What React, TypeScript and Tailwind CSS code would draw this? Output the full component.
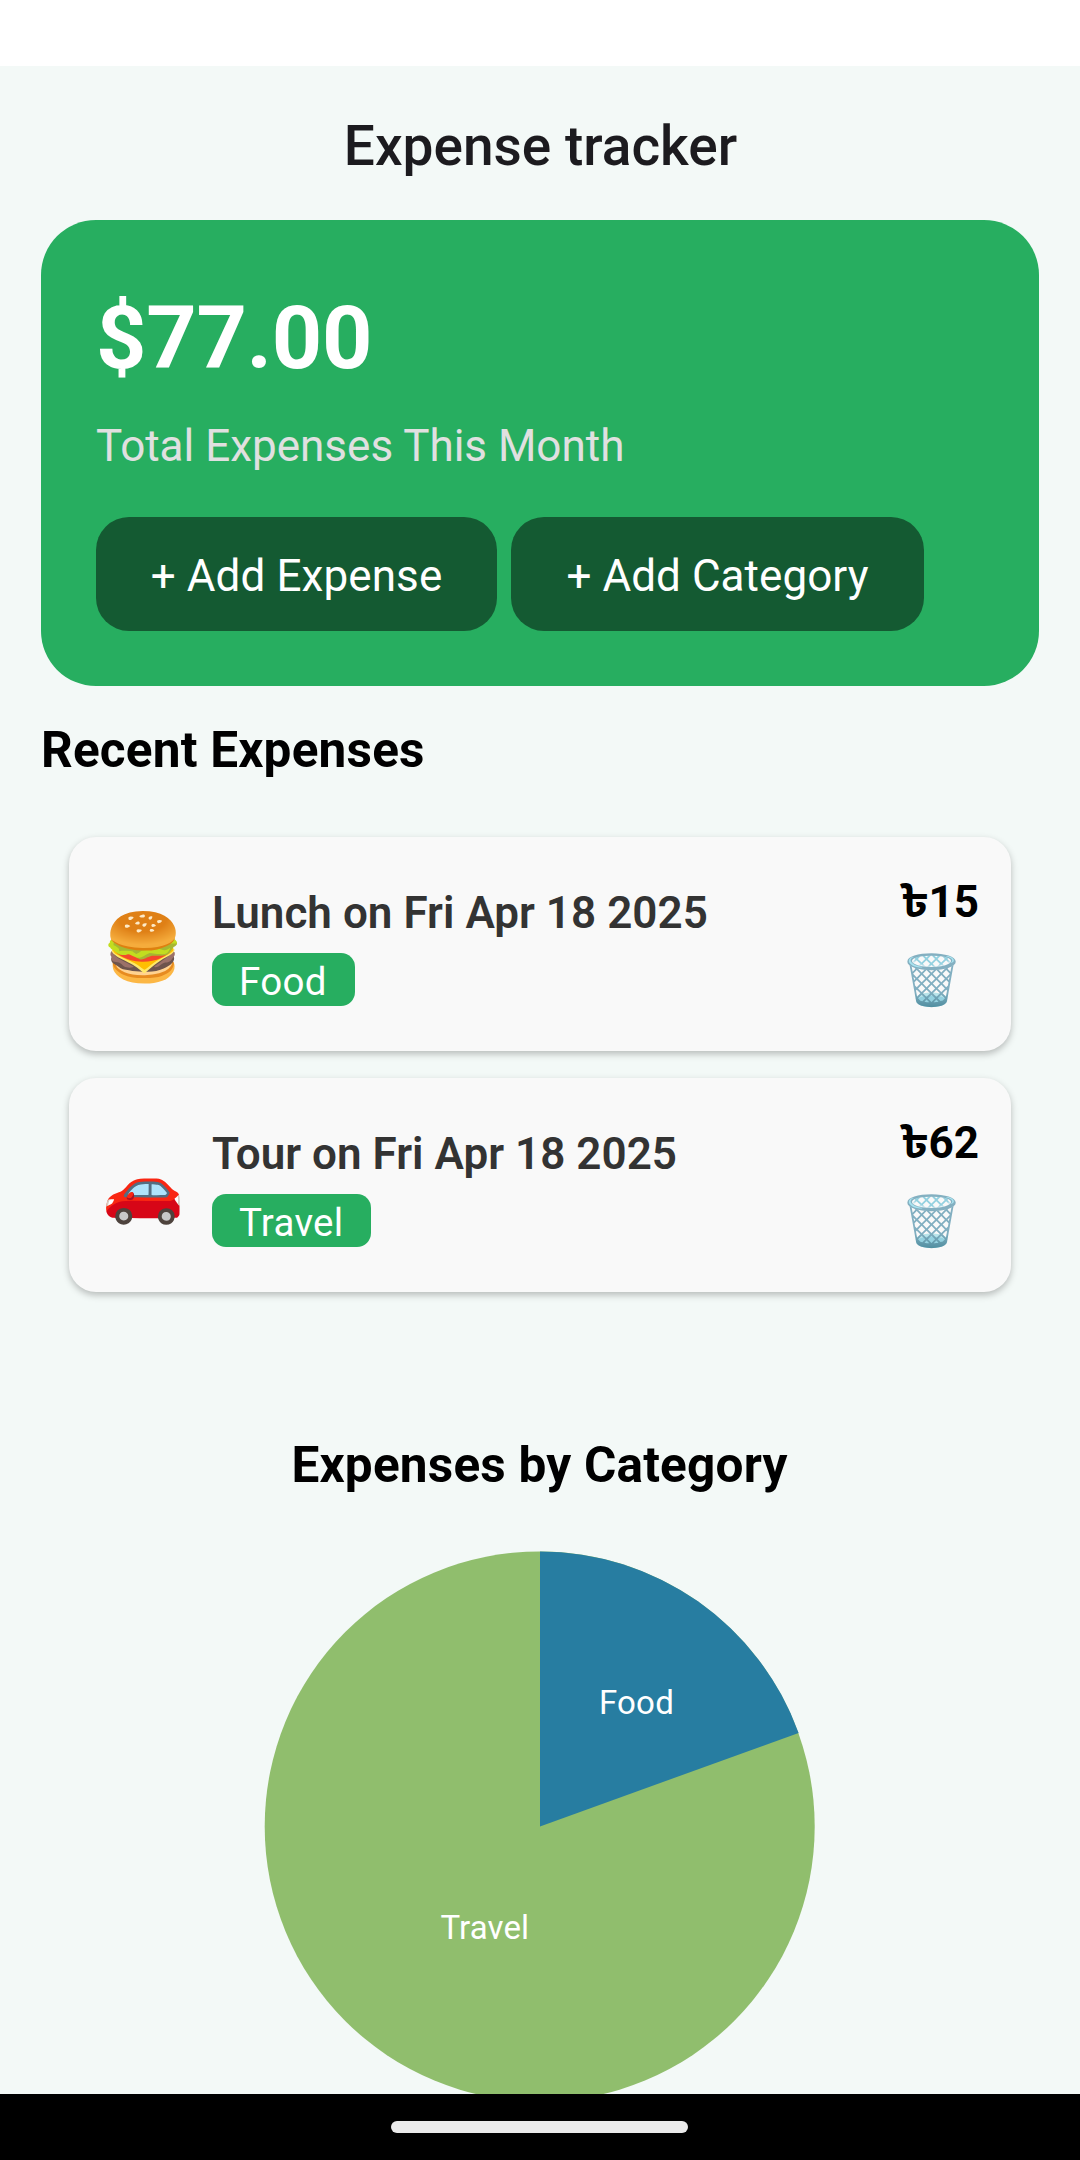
const expenses = [
  { icon: "🍔", title: "Lunch on Fri Apr 18 2025", category: "Food", amount: "15" },
  { icon: "🚗", title: "Tour on Fri Apr 18 2025", category: "Travel", amount: "62" },
];

export default function App() {
  return (
    <div className="flex h-[2160px] w-[1080px] flex-col overflow-hidden bg-[#f3f9f7] font-['Roboto','Noto_Sans_Bengali_UI',sans-serif] text-black">
      <div className="h-[66px] shrink-0 bg-white" />
      <main className="flex min-h-0 flex-1 flex-col overflow-hidden">
        <h1 className="mt-[44px] pl-px text-center text-[55px] leading-[72px] font-medium text-[#1c1b1f]">Expense tracker</h1>
        <section className="mx-[41px] mt-[38px] h-[466px] shrink-0 rounded-[55px] bg-[#27ae60] px-[55px] pt-[66px]">
          <p className="text-[88px] leading-[104px] font-bold tracking-[-0.3px] text-white">$77.00</p>
          <p className="mt-[30px] text-[44px] leading-[52px] text-[#e0e0e0]">Total Expenses This Month</p>
          <div className="mt-[45px] flex gap-[14px]">
            <button className="h-[114px] w-[401px] rounded-[33px] bg-[#145a32] pt-[3px] text-[44px] tracking-[0.1px] text-white">+ Add Expense</button>
            <button className="h-[114px] w-[413px] rounded-[33px] bg-[#145a32] pt-[3px] text-[44px] tracking-[0.05px] text-white">+ Add Category</button>
          </div>
        </section>
        <h2 className="mt-[34px] ml-[41px] text-[49.5px] leading-[60px] font-bold tracking-[0.2px]">Recent Expenses</h2>
        <ul className="mx-[69px] mt-[57px] flex flex-col gap-[27px]">
          {expenses.map((e) => (
            <li key={e.title} className="flex h-[214px] items-start rounded-[27px] bg-[#f9f9f9] shadow-[0_3px_7px_rgba(0,0,0,0.25)]">
              <span className="mt-[61px] ml-[33px] w-[110px] text-[66px] leading-[99px]">{e.icon}</span>
              <div className="mt-[50px] flex flex-1 flex-col items-start">
                <p className="text-[44px] leading-[52px] font-semibold tracking-[0.03px] text-[#333]">{e.title}</p>
                <span className="mt-[14px] h-[53px] min-w-[143px] rounded-[14px] bg-[#27ae60] px-[27px] text-[38.5px] leading-[58px] tracking-[0.3px] text-white">{e.category}</span>
              </div>
              <div className="mt-[35px] mr-[32px] flex flex-col">
                <p className="text-[44px] leading-[60px] font-bold">৳{e.amount}</p>
                <span className="mt-[13px] ml-px text-[49px] leading-[72px]">🗑️</span>
              </div>
            </li>
          ))}
        </ul>
        <h2 className="mt-[143px] pr-px text-center text-[49.5px] leading-[60px] font-bold tracking-[0.2px]">Expenses by Category</h2>
        <svg className="mx-auto mt-[57px] block h-[550px] w-[550px] shrink-0 overflow-visible" viewBox="0 0 550 550">
          <circle cx="274.7" cy="274.5" r="275" fill="#90be6d" />
          <path d="M275 274.5V-0.5A275 275 0 0 1 533.6 180.9Z" fill="#277da1" />
          <text x="334" y="162" fontSize="33" letterSpacing="0.2" fill="#fff">Food</text>
          <text x="175.5" y="387" fontSize="33" letterSpacing="0.1" fill="#fff">Travel</text>
        </svg>
      </main>
      <div className="flex h-[66px] shrink-0 items-center justify-center bg-black">
        <div className="mr-px h-[12px] w-[297px] rounded-full bg-[#eaeaea]" />
      </div>
    </div>
  );
}
